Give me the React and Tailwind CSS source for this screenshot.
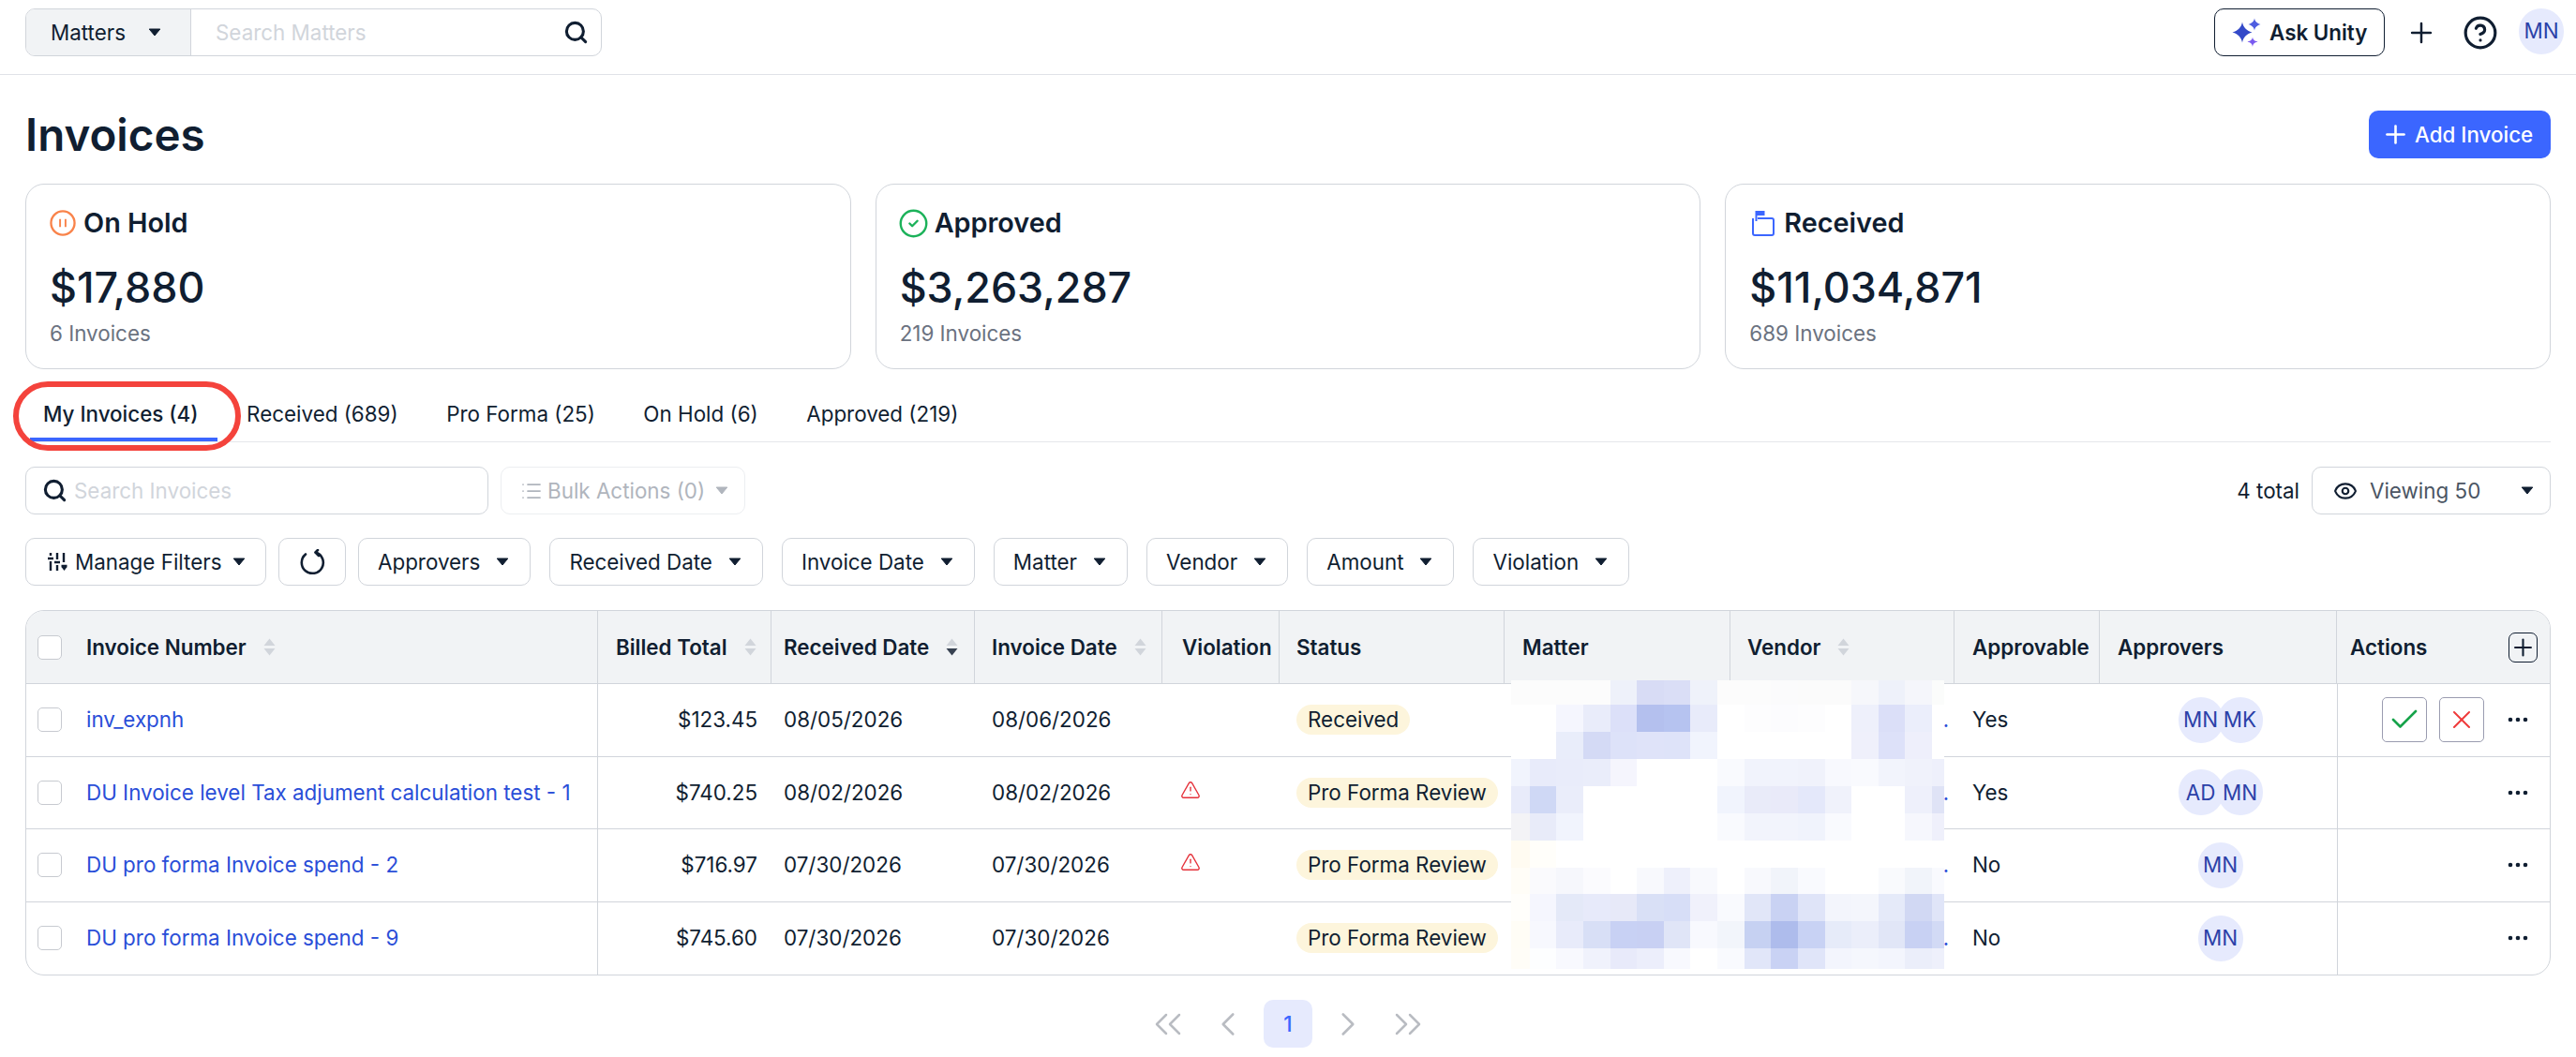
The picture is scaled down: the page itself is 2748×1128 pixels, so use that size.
import { Check, ChevronLeft, ChevronRight, ChevronsLeft, ChevronsRight, CircleCheck, CircleHelp, Eye, List, Plus, Search, TriangleAlert, X } from "lucide-react";

const FILTERS = ["Approvers", "Received Date", "Invoice Date", "Matter", "Vendor", "Amount", "Violation"];

const TABS = ["My Invoices (4)", "Received (689)", "Pro Forma (25)", "On Hold (6)", "Approved (219)"];

const INVOICES = [
  { name: "inv_expnh", total: "$123.45", received: "08/05/2026", date: "08/06/2026", status: "Received", approvable: "Yes", approvers: ["MN", "MK"], canAct: true },
  { name: "DU Invoice level Tax adjument calculation test - 1", total: "$740.25", received: "08/02/2026", date: "08/02/2026", violation: true, status: "Pro Forma Review", approvable: "Yes", approvers: ["AD", "MN"] },
  { name: "DU pro forma Invoice spend - 2", total: "$716.97", received: "07/30/2026", date: "07/30/2026", violation: true, status: "Pro Forma Review", approvable: "No", approvers: ["MN"] },
  { name: "DU pro forma Invoice spend - 9", total: "$745.60", received: "07/30/2026", date: "07/30/2026", status: "Pro Forma Review", approvable: "No", approvers: ["MN"] },
];

// redacted matter/vendor block, drawn as a picture over the table
const MOSAIC_X = [0, 20, 48, 77, 106, 134, 163, 191, 220, 249, 277, 306, 335, 363, 392, 420, 449, 462];
const MOSAIC_Y = [0, 26, 55, 84, 113, 142, 171, 200, 228, 257, 286, 308];
const MOSAIC = [
  ["#fcfcfc", "#fcfcfc", "#fcfcfc", "#fcfcfc", "#eef1fa", "#d8dcf5", "#dadef6", "#eff2fa", "#fcfcfc", "#fcfcfc", "#fbfbfc", "#fbfbfb", "#fbfbfb", "#f6f7fb", "#eef1fa", "#f5f6fb", "#fbfcfb"],
  ["#ffffff", "#ffffff", "#f5f6fe", "#e9ecfa", "#dce0f9", "#b4c0ee", "#b6c3f0", "#e8ebfa", "#ffffff", "#fdfdfe", "#fcfcfe", "#fdfdfe", "#ffffff", "#eef0fb", "#dbdff8", "#ebeefb", "#ffffff"],
  ["#ffffff", "#ffffff", "#e9edfa", "#d4daf5", "#dde2f9", "#dfe3f9", "#dee3f9", "#f1f4fd", "#ffffff", "#ffffff", "#ffffff", "#ffffff", "#ffffff", "#eff0fb", "#dde1f9", "#eeeffb", "#ffffff"],
  ["#f1f4fd", "#e8ebfa", "#e9ecfa", "#eaedfa", "#f5f5fd", "#ffffff", "#ffffff", "#ffffff", "#f9fafe", "#f1f3fc", "#f1f3fc", "#f0f2fb", "#f8f9fe", "#f9fafe", "#f2f4fc", "#f0f2fb", "#eef0fb"],
  ["#e8ebfa", "#cfd8f5", "#eaedfa", "#ffffff", "#ffffff", "#ffffff", "#ffffff", "#ffffff", "#f1f4fd", "#e9ebf9", "#e9eaf9", "#e4e8fa", "#f0f2fb", "#ffffff", "#ffffff", "#eef0fb", "#dfe3f6"],
  ["#f3f3f6", "#e8ebf9", "#f1f4fd", "#ffffff", "#ffffff", "#ffffff", "#ffffff", "#ffffff", "#f9fafe", "#f2f4fc", "#f2f4fc", "#f0f3fc", "#f9fafe", "#ffffff", "#ffffff", "#f6f7fd", "#eff0fb"],
  ["#fffbf1", "#fffefa", "#ffffff", "#ffffff", "#ffffff", "#ffffff", "#ffffff", "#ffffff", "#ffffff", "#ffffff", "#ffffff", "#ffffff", "#ffffff", "#ffffff", "#ffffff", "#ffffff", "#ffffff"],
  ["#fffdf7", "#fafafd", "#f6f7fc", "#fbfbfe", "#ffffff", "#f8f9fd", "#eef0fb", "#f8f9fd", "#ffffff", "#f8f9fd", "#f1f4fa", "#f9fafe", "#ffffff", "#ffffff", "#f9fafd", "#f1f4fa", "#f9fafe"],
  ["#fffefb", "#f5f6fe", "#e4e9f8", "#e7eafa", "#e7e9f8", "#d9e0f6", "#d7def7", "#f0f1fb", "#f9fafe", "#e1e6f8", "#c9d2f3", "#dfe4f8", "#f3f5fc", "#f4f6fc", "#e5eaf9", "#d1d8f3", "#e0e5f8"],
  ["#fffdf6", "#f7f8fe", "#e8ebfa", "#d8dff6", "#c8d1f4", "#c8d0f3", "#e0e5f7", "#f8f9fe", "#f2f5fb", "#c6d1f2", "#aebcec", "#c8d2f4", "#e6ebf9", "#ebeefa", "#e1e6f7", "#c8d1f3", "#d2daf5"],
  ["#fffdf7", "#fdfeff", "#f8f9fe", "#f0f2fc", "#e8eafa", "#eceefb", "#f8f9fe", "#ffffff", "#f9fafe", "#e1e6f9", "#c9d2f4", "#e0e5f9", "#f3f5fd", "#f5f7fd", "#f3f5fd", "#ebeefa", "#eef0fb"],
];

const GRID = "grid grid-cols-[610px_185px_217px_200px_125px_240px_241px_239px_155px_253px_1fr]";

function Caret({ color = "#101e31" }) {
  return (
    <svg width="14" height="9" viewBox="0 0 14 9" className="shrink-0">
      <path d="M1.2 1h11.6L7 8z" fill={color} stroke={color} strokeWidth="1" strokeLinejoin="round" />
    </svg>
  );
}

function SortIcon({ active }) {
  return (
    <svg width="13" height="19" viewBox="0 0 13 19" className="shrink-0">
      <path d="M6.5 0.5 12.5 8H0.5z" fill="#d1d5db" />
      <path d="M6.5 18.5 12.5 11H0.5z" fill={active ? "#374151" : "#d1d5db"} />
    </svg>
  );
}

function PauseIcon() {
  return (
    <svg width="28" height="28" viewBox="0 0 29 29" className="shrink-0">
      <circle cx="14.5" cy="14.5" r="13" fill="none" stroke="#f9834a" strokeWidth="2.4" />
      <path d="M11.5 10v9M17.5 10v9" stroke="#f9834a" strokeWidth="2" />
    </svg>
  );
}

function ReceivedIcon() {
  return (
    <svg width="24" height="27" viewBox="0 0 24 27" className="shrink-0 ml-[3px] mr-[2px]">
      <path d="M6 8H21a2 2 0 0 1 2 2v14a2 2 0 0 1-2 2H3a2 2 0 0 1-2-2V8" fill="none" stroke="#3b66ff" strokeWidth="2" />
      <path d="M3.500 0h10v5h-10z" fill="#3b66ff" />
      <path d="M3.500 5h2v6h-2z" fill="#3b66ff" />
    </svg>
  );
}

function SparkleIcon() {
  return (
    <svg width="32" height="32" viewBox="0 0 32 32" className="shrink-0">
      <path d="M11 4.5C12 10 15 13.500 21.500 15.500 15 17.500 12 21 11 26.500 10 21 7 17.500 0.500 15.500 7 13.500 10 10 11 4.500z" fill="#3349c8" />
      <path d="M24 0.500C24.500 3.500 26 5.500 30.500 7 26 8.500 24.500 10.500 24 13.500 23.500 10.500 22 8.500 17.500 7 22 5.500 23.500 3.500 24 0.500z" fill="#4f5ee0" />
      <path d="M22 20.500C22.400 23 23.500 24.500 27.500 25.500 23.500 26.500 22.400 28 22 31 21.600 28 20.500 26.500 16.500 25.500 20.500 24.500 21.600 23 22 20.500z" fill="#7a5af0" />
    </svg>
  );
}

function FiltersIcon() {
  return (
    <svg width="21" height="19" viewBox="0 0 21 19" className="shrink-0" stroke="#101e31" strokeWidth="2.4" fill="none">
      <path d="M3 0v3M3 9v10M0 6h6M10 0v7M10 13v6M7 10h6M17 0v10M14.500 14h6" />
      <path d="M14.500 15h6L17.500 19z" fill="#101e31" stroke="none" />
    </svg>
  );
}

function RefreshIcon() {
  return (
    <svg width="28" height="27" viewBox="0 0 28 27" fill="none" stroke="#101e31" strokeWidth="2.6" strokeLinecap="round" strokeLinejoin="round">
      <path d="M7 5.500A11.500 11.500 0 1 0 18 3.500" />
      <path d="M20 1 17.500 3.500 21 7" />
    </svg>
  );
}

function Dots() {
  return (
    <svg width="22" height="6" viewBox="0 0 22 6" className="shrink-0" fill="#101e31">
      <circle cx="3" cy="3" r="2.300" />
      <circle cx="11" cy="3" r="2.300" />
      <circle cx="19" cy="3" r="2.300" />
    </svg>
  );
}

function Avatar({ initials }) {
  return (
    <div className="w-[48px] h-[49px] rounded-full bg-[#e6eafd] flex items-center justify-center text-[22.4px] leading-none text-[#2b41a8]">
      {initials}
    </div>
  );
}

function StatCard({ icon, title, amount, count }) {
  return (
    <div className="h-[198px] border border-[#d1d5db] rounded-[20px] pt-[23px] px-[25px]">
      <div className="flex items-center gap-[8px] h-[36px]">
        {icon}
        <span className="text-[28.8px] leading-[36px] font-semibold text-[#101e31]">{title}</span>
      </div>
      <div className="mt-[23px] text-[44.8px] leading-[56px] font-medium text-[#101e31]">{amount}</div>
      <div className="mt-[6px] text-[22.4px] leading-[30px] text-[#6b7280]">{count}</div>
    </div>
  );
}

function HeaderCell({ label, sort, active, className }) {
  return (
    <div className={`flex items-center gap-[18px] border-r border-[#d1d5db] ${className}`}>
      <span className="text-[22.4px] font-semibold text-[#101e31] whitespace-nowrap">{label}</span>
      {sort && <SortIcon active={active} />}
    </div>
  );
}

function Checkbox() {
  return <div className="w-[26px] h-[26px] shrink-0 bg-white border border-[#c7cad0] rounded-[5px]" />;
}

export default function App() {
  return (
    <div className="min-h-screen bg-white font-['Inter',sans-serif] text-[#101e31]">
      <header className="h-[80px] border-b border-[#e0e2e8] pt-[9px] px-[27px] flex items-start justify-between">
        <div className="flex w-[615px] h-[51px] border border-[#d1d5db] rounded-[10px] overflow-hidden">
          <div className="w-[176px] bg-[#f1f3f5] border-r border-[#d1d5db] flex items-center pl-[26px] gap-[24px]">
            <span className="text-[22.4px]">Matters</span>
            <Caret />
          </div>
          <input placeholder="Search Matters" className="flex-1 min-w-0 pl-[26px] text-[22.4px] outline-none placeholder:text-[#d1d5db]" />
          <div className="flex items-center pr-[13px]">
            <Search size={27} strokeWidth={2.750} />
          </div>
        </div>
        <div className="flex items-center h-[51px] -mr-[14px]">
          <button className="w-[182px] h-[51px] border border-[#101e31] rounded-[10px] flex items-center pl-[18px] gap-[8px] text-[22.4px] font-semibold">
            <SparkleIcon />
            Ask Unity
          </button>
          <Plus size={34} strokeWidth={1.750} className="ml-[22px]" />
          <CircleHelp size={38} strokeWidth={2} className="ml-[27px]" />
          <div className="ml-[22px] -mt-[2px]">
            <Avatar initials="MN" />
          </div>
        </div>
      </header>

      <main className="px-[27px] pt-[38px]">
        <div className="flex items-center justify-between h-[51px]">
          <h1 className="text-[47.500px] font-semibold leading-none">Invoices</h1>
          <button className="w-[194px] h-[51px] bg-[#3b66ff] rounded-[10px] text-white text-[22.4px] font-medium flex items-center pl-[13px] gap-[5px]">
            <Plus size={31} strokeWidth={2} />
            Add Invoice
          </button>
        </div>

        <div className="grid grid-cols-3 gap-[26px] mt-[27px]">
          <StatCard icon={<PauseIcon />} title="On Hold" amount="$17,880" count="6 Invoices" />
          <StatCard icon={<CircleCheck size={33} strokeWidth={1.750} color="#1cb25a" className="-mx-[2px]" />} title="Approved" amount="$3,263,287" count="219 Invoices" />
          <StatCard icon={<ReceivedIcon />} title="Received" amount="$11,034,871" count="689 Invoices" />
        </div>

        <div className="relative mt-[22px] h-[56px] border-b border-[#e5e7eb] flex items-start pt-[10px] pl-[19px] gap-[51.500px]">
          {TABS.map((tab, i) => (
            <div key={tab} className={`relative text-[22.4px] leading-[32px] whitespace-nowrap ${i === 0 ? "font-medium" : ""}`}>
              {tab}
              {i === 0 && <div className="absolute -left-[14px] -right-[20px] top-[41px] h-[4px] bg-[#3b66ff]" />}
            </div>
          ))}
          <div className="absolute -left-[13px] -top-[9px] w-[243px] h-[74px] border-[6px] border-[#f4433c] rounded-[37px] pointer-events-none" />
        </div>

        <div className="flex items-center justify-between mt-[26px] h-[51px]">
          <div className="flex items-center gap-[13px]">
            <div className="w-[494px] h-[51px] border border-[#d1d5db] rounded-[10px] flex items-center pl-[17px] gap-[7px]">
              <Search size={27} strokeWidth={2.750} />
              <input placeholder="Search Invoices" className="flex-1 min-w-0 text-[22.4px] outline-none placeholder:text-[#d1d5db]" />
            </div>
            <div className="w-[261px] h-[51px] border border-[#eceef1] rounded-[10px] flex items-center pl-[20px] text-[22.4px] text-[#b0b5bd]">
              <List size={24} strokeWidth={1.750} color="#b0b5bd" />
              <span className="ml-[5px]">Bulk Actions (0)</span>
              <span className="ml-[11px]"><Caret color="#b0b5bd" /></span>
            </div>
          </div>
          <div className="flex items-center gap-[13px]">
            <span className="text-[22.4px]">4 total</span>
            <div className="w-[255px] h-[51px] border border-[#d1d5db] rounded-[10px] flex items-center pl-[22px] pr-[17px]">
              <Eye size={26} strokeWidth={2} />
              <span className="ml-[13px] flex-1 text-[22.4px] text-[#4b5563]">Viewing 50</span>
              <Caret />
            </div>
          </div>
        </div>

        <div className="flex items-center mt-[25px] h-[51px]">
          <button className="h-[51px] w-[257px] border border-[#d1d5db] rounded-[10px] flex items-center pl-[23px] text-[22.4px]">
            <FiltersIcon />
            <span className="ml-[8px]">Manage Filters</span>
            <span className="ml-[12px]"><Caret /></span>
          </button>
          <button className="ml-[13px] w-[72px] h-[51px] border border-[#d1d5db] rounded-[10px] flex items-center justify-center">
            <RefreshIcon />
          </button>
          <div className="ml-[13px] flex items-center gap-[20px]">
            {FILTERS.map(f => (
              <button key={f} className="h-[51px] border border-[#d1d5db] rounded-[10px] flex items-center pl-[20px] pr-[22px] gap-[17px] text-[22.4px]">
                {f}
                <Caret />
              </button>
            ))}
          </div>
        </div>

        <div className="relative mt-[26px] border border-[#d1d5db] rounded-[20px] overflow-hidden">
          <div className={`${GRID} h-[78px] bg-[#f1f3f5] border-b border-[#d1d5db]`}>
            <div className="flex items-center border-r border-[#d1d5db] pl-[12px] gap-[26px]">
              <Checkbox />
              <div className="flex items-center gap-[18px]">
                <span className="text-[22.4px] font-semibold">Invoice Number</span>
                <SortIcon />
              </div>
            </div>
            <HeaderCell label="Billed Total" sort className="pl-[19px]" />
            <HeaderCell label="Received Date" sort active className="pl-[13px]" />
            <HeaderCell label="Invoice Date" sort className="pl-[18px]" />
            <HeaderCell label="Violation" className="pl-[21px]" />
            <HeaderCell label="Status" className="pl-[18px]" />
            <HeaderCell label="Matter" className="pl-[19px]" />
            <HeaderCell label="Vendor" sort className="pl-[18px]" />
            <HeaderCell label="Approvable" className="pl-[19px]" />
            <HeaderCell label="Approvers" className="pl-[19px]" />
            <div className="flex items-center justify-between pl-[14px] pr-[13px]">
              <span className="text-[22.4px] font-semibold">Actions</span>
              <div className="w-[31px] h-[32px] border border-[#101e31] rounded-[7px] flex items-center justify-center">
                <Plus size={30} strokeWidth={1.750} />
              </div>
            </div>
          </div>

          {INVOICES.map((inv, i) => (
            <div key={inv.name} className={`${GRID} h-[77.500px] text-[22.4px] ${i < 3 ? "border-b border-[#d1d5db]" : ""}`}>
              <div className="flex items-center border-r border-[#d1d5db] pl-[12px] gap-[26px]">
                <Checkbox />
                <a className="text-[#2a4ed8] whitespace-nowrap">{inv.name}</a>
              </div>
              <div className="flex items-center justify-end pr-[15px]">{inv.total}</div>
              <div className="flex items-center pl-[13px]">{inv.received}</div>
              <div className="flex items-center pl-[18px]">{inv.date}</div>
              <div className="flex items-center pl-[19px]">
                {inv.violation && <TriangleAlert size={22} strokeWidth={1.500} color="#e5323b" className="mb-[6px]" />}
              </div>
              <div className="flex items-center pl-[18px]">
                <span className="h-[32px] px-[12px] rounded-full bg-[#fdf5dc] flex items-center whitespace-nowrap">{inv.status}</span>
              </div>
              <div />
              <div className="flex items-center justify-end pr-[6px] text-[#2a4ed8]">…</div>
              <div className="flex items-center pl-[19px]">{inv.approvable}</div>
              <div className="flex items-center justify-center pl-[4px]">
                {inv.approvers.map((a, j) => (
                  <div key={a} className={j > 0 ? "-ml-[6px]" : "relative z-10"}>
                    <Avatar initials={a} />
                  </div>
                ))}
              </div>
              <div className="flex items-center justify-end border-l border-[#d1d5db] pr-[23px]">
                {inv.canAct && (
                  <div className="flex items-center gap-[13px] mr-[25px]">
                    <button className="w-[48px] h-[48px] border border-[#9a9cb0] rounded-[5px] flex items-center justify-center">
                      <Check size={36} strokeWidth={1.750} color="#16a34a" />
                    </button>
                    <button className="w-[48px] h-[48px] border border-[#9a9cb0] rounded-[5px] flex items-center justify-center">
                      <X size={32} strokeWidth={1.500} color="#ef3a3a" />
                    </button>
                  </div>
                )}
                <Dots />
              </div>
            </div>
          ))}

          <svg width="462" height="308" className="absolute left-[1584px] top-[74px]" shapeRendering="crispEdges">
            {MOSAIC.map((row, r) =>
              row.map((c, k) => (
                <rect key={`${r}-${k}`} x={MOSAIC_X[k]} y={MOSAIC_Y[r]} width={MOSAIC_X[k + 1] - MOSAIC_X[k]} height={MOSAIC_Y[r + 1] - MOSAIC_Y[r]} fill={c} />
              ))
            )}
          </svg>
        </div>

        <div className="flex items-center justify-center gap-[12px] mt-[26px] text-[#b9bcc2]">
          <div className="w-[52px] h-[51px] flex items-center justify-center"><ChevronsLeft size={48} strokeWidth={1.250} /></div>
          <div className="w-[52px] h-[51px] flex items-center justify-center"><ChevronLeft size={42} strokeWidth={1.500} /></div>
          <div className="w-[52px] h-[51px] rounded-[10px] bg-[#e6eafd] text-[#3b66ff] text-[22.4px] font-medium flex items-center justify-center">1</div>
          <div className="w-[52px] h-[51px] flex items-center justify-center"><ChevronRight size={42} strokeWidth={1.500} /></div>
          <div className="w-[52px] h-[51px] flex items-center justify-center"><ChevronsRight size={48} strokeWidth={1.250} /></div>
        </div>
      </main>
    </div>
  );
}
